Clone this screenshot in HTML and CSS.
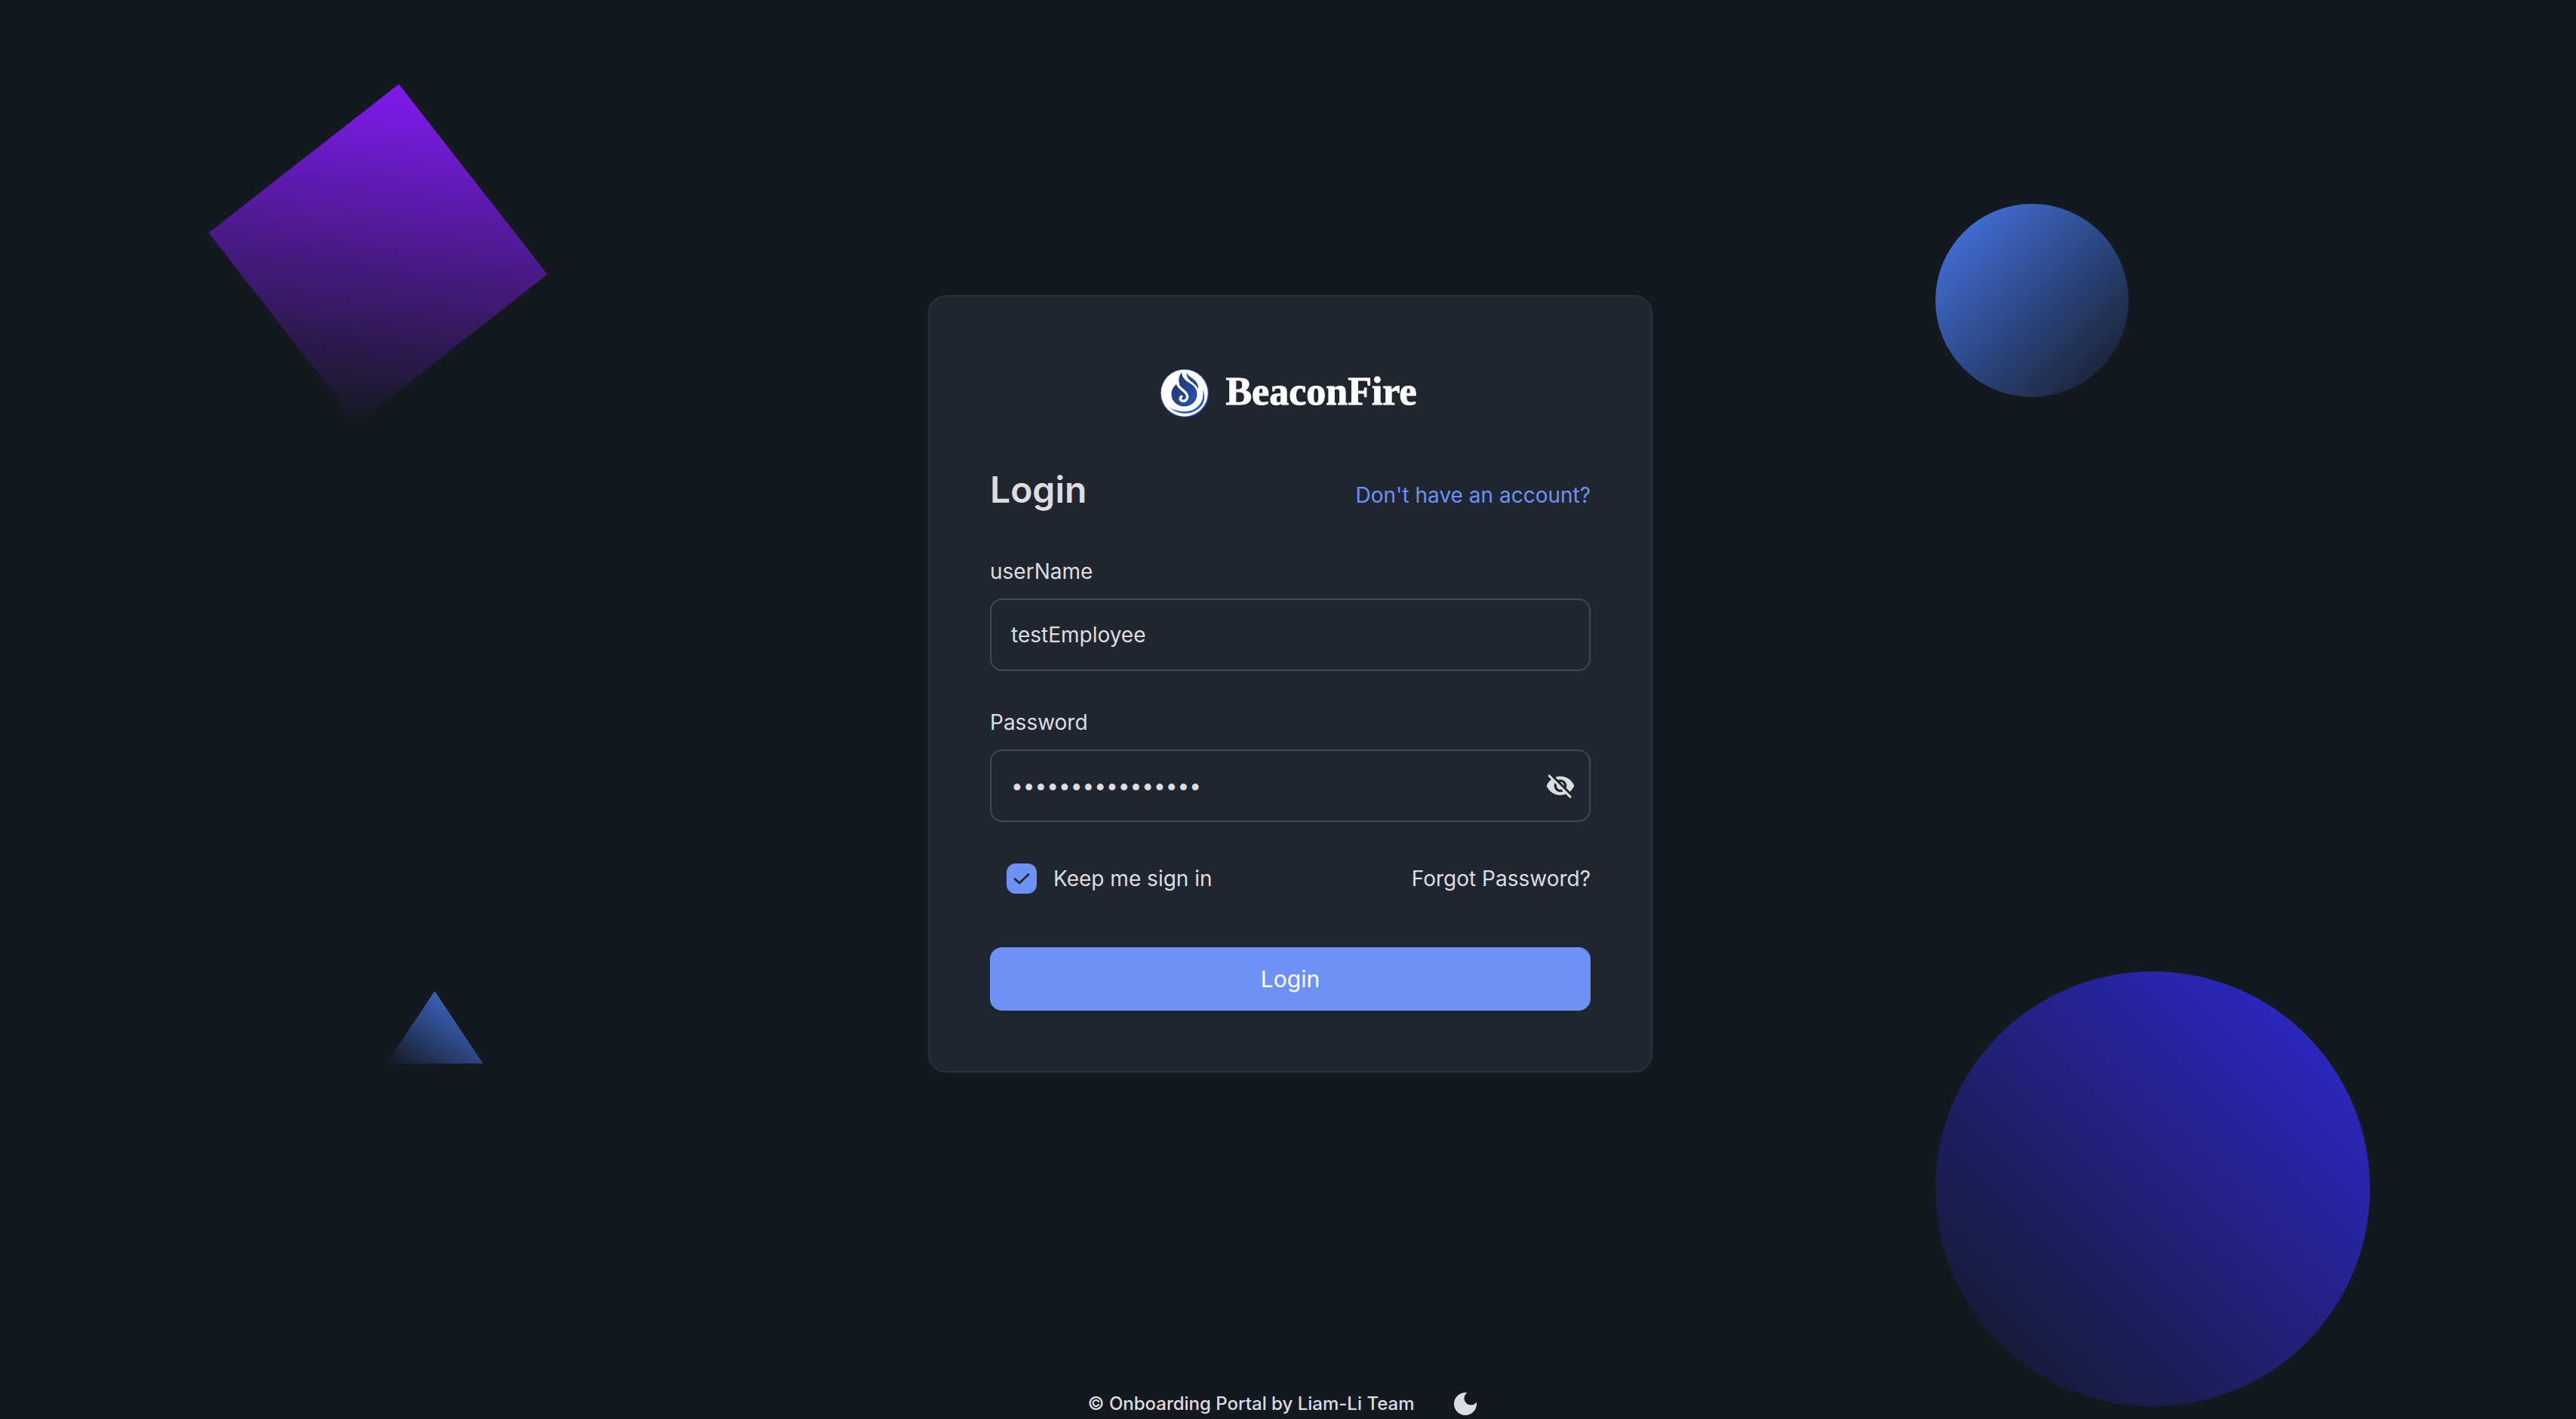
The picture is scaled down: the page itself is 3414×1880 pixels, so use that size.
FILE: index.html
```html
<!DOCTYPE html>
<html lang="en">
<head>
  <meta charset="utf-8">
  <meta name="viewport" content="width=device-width, initial-scale=1">
  <title>BeaconFire Login</title>
  <link rel="stylesheet" href="styles.css">
</head>
<body class="page">
  <div class="backdrop" aria-hidden="true">
    <div class="shape shape-square"></div>
    <div class="shape shape-triangle"></div>
    <div class="shape shape-circle-small"></div>
    <div class="shape shape-circle-large"></div>
  </div>

  <main class="main">
    <form class="card">
      <div class="brand">
        <svg class="brand-logo" viewBox="0 0 64 64" aria-hidden="true">
          <defs>
            <linearGradient id="flame" x1="0" y1="0" x2="1" y2="1">
              <stop offset="0" stop-color="#1c2f66"/>
              <stop offset="1" stop-color="#2c56b4"/>
            </linearGradient>
          </defs>
          <circle cx="32" cy="32" r="32" fill="#2a53b0"/>
          <circle cx="31.7" cy="31.7" r="31" fill="#fff"/>
          <path d="M28 4.500C24.500 9 23 15 25.500 20.500L21.500 19.500C17 23 14.500 28 14.500 33C14.500 42 22 49.500 31.500 49.500C41 49.500 48.500 42.500 48.500 33.500C48.500 25 43 21 37 17.500C32 14.500 28.500 10 28 4.500Z" fill="url(#flame)"/>
          <path d="M22.500 18.500C23 26.500 34.800 28 35.600 36C36 40.500 32 43 29 42.200C25.800 41.200 25.300 37.600 28 36.400" fill="none" stroke="#fff" stroke-width="3.400" stroke-linecap="round"/>
          <path d="M34.500 4.500C36.500 9 41 11 45 14.500C49 18 50.500 22 50 26.500C47 20.500 43 18.500 39.500 15.500C36 12.500 34 9 34.500 4.500Z" fill="#2548a0"/>
          <path d="M56 27.500C58 38 54 48 44 53.500C34 58 22 56.500 12 51C24 60.500 36 60.500 46 55.500C58 49.500 61 37.500 56 27.500Z" fill="#2d5abb"/>
        </svg>
        <span class="brand-name">BeaconFire</span>
      </div>

      <div class="heading">
        <h1 class="title">Login</h1>
        <a class="link link-primary" href="#register">Don't have an account?</a>
      </div>

      <div class="field">
        <label class="label" for="username">userName</label>
        <div class="control">
          <input class="input" id="username" type="text" value="testEmployee">
        </div>
      </div>

      <div class="field">
        <label class="label" for="password">Password</label>
        <div class="control">
          <input class="input" id="password" type="password" value="passwordpassword">
          <button class="icon-button" type="button" aria-label="Toggle password visibility">
            <svg class="icon" viewBox="0 0 24 24" aria-hidden="true"><path d="M12 7c2.76 0 5 2.24 5 5 0 .65-.13 1.26-.36 1.83l2.92 2.92c1.51-1.26 2.700-2.890 3.430-4.750-1.730-4.390-6-7.500-11-7.500-1.400 0-2.740.25-3.980.7l2.160 2.160C10.740 7.130 11.350 7 12 7zM2 4.270l2.280 2.280.46.46C3.080 8.300 1.780 10.020 1 12c1.730 4.390 6 7.500 11 7.500 1.550 0 3.030-.3 4.380-.84l.42.42L19.730 22 21 20.730 3.270 3 2 4.270zM7.530 9.800l1.550 1.550c-.05.21-.08.43-.08.65 0 1.660 1.340 3 3 3 .22 0 .44-.03.65-.08l1.550 1.550c-.67.33-1.410.53-2.200.53-2.760 0-5-2.240-5-5 0-.79.2-1.530.53-2.200zm4.310-.78l3.150 3.150.02-.16c0-1.660-1.340-3-3-3l-.17.01z"/></svg>
          </button>
        </div>
      </div>

      <div class="options">
        <label class="remember">
          <input class="checkbox" type="checkbox" checked>
          Keep me sign in
        </label>
        <a class="link" href="#forgot">Forgot Password?</a>
      </div>

      <button class="submit" type="submit">Login</button>
    </form>
  </main>

  <footer class="footer">
    <span class="copyright">© Onboarding Portal by Liam-Li Team</span>
    <button class="theme-toggle" type="button" aria-label="Toggle theme">
      <svg class="icon" viewBox="0 0 24 24" aria-hidden="true"><path d="M12 3c-4.970 0-9 4.030-9 9s4.030 9 9 9 9-4.030 9-9c0-.46-.04-.92-.1-1.360-.98 1.370-2.580 2.260-4.400 2.260-2.980 0-5.400-2.420-5.400-5.400 0-1.810.89-3.420 2.260-4.400-.44-.06-.9-.1-1.360-.1z"/></svg>
    </button>
  </footer>
</body>
</html>
```

FILE: styles.css
```css
:root {
  --bg: #14191f;
  --card: #20262f;
  --card-border: #2b313b;
  --field-border: #424952;
  --text: #dcdde0;
  --primary: #6c92f7;
}

* {
  box-sizing: border-box;
}

.page {
  position: relative;
  display: flex;
  flex-direction: column;
  min-height: 100vh;
  margin: 0;
  background: var(--bg);
  color: var(--text);
  font-family: Inter, "Liberation Sans", sans-serif;
  font-size: 28px;
  line-height: 40px;
}

/* Decorative shapes behind the card */
.backdrop {
  position: absolute;
  inset: 0;
  overflow: hidden;
}

.shape {
  position: absolute;
}

.shape-square {
  top: 176px;
  left: 10%;
  width: 320px;
  height: 320px;
  background: linear-gradient(135deg, #801bf1, rgba(128, 27, 241, 0));
  transform: rotate(52deg);
}

.shape-triangle {
  top: 1313px;
  left: 15%;
  width: 128px;
  height: 96px;
  background: linear-gradient(215deg, #4778ec, rgba(71, 120, 236, 0));
  clip-path: polygon(50% 0, 100% 100%, 0 100%);
}

.shape-circle-small {
  top: 270px;
  right: calc(8% + 320px);
  width: 256px;
  height: 256px;
  border-radius: 50%;
  background: linear-gradient(135deg, #4778ec, rgba(71, 120, 236, 0));
}

.shape-circle-large {
  top: 1287px;
  right: 8%;
  width: 576px;
  height: 576px;
  border-radius: 50%;
  background: linear-gradient(225deg, #2e29d8, rgba(46, 41, 216, 0));
}

.main {
  position: relative;
  display: flex;
  flex: 1;
  align-items: center;
  justify-content: center;
  padding-left: 6px;
}

.card {
  display: flex;
  flex-direction: column;
  width: 960px;
  padding: 80px;
  border: 2px solid var(--card-border);
  border-radius: 24px;
  background: var(--card);
}

.brand {
  display: flex;
  align-items: center;
  justify-content: center;
  gap: 22px;
  height: 96px;
  margin-bottom: 48px;
  padding-right: 4px;
}

.brand-logo {
  width: 64px;
  height: 64px;
}

.brand-name {
  padding-bottom: 4px;
  color: #fff;
  font-family: "Liberation Serif", serif;
  font-size: 52px;
  font-weight: 700;
  line-height: 64px;
  -webkit-text-stroke: 1px #fff;
}

.heading {
  display: flex;
  align-items: baseline;
  justify-content: space-between;
  margin-bottom: 56px;
}

.title {
  margin: 0;
  font-size: 48px;
  font-weight: 600;
  line-height: 64px;
}

.link {
  color: var(--text);
  text-decoration: none;
}

.link-primary {
  color: var(--primary);
}

.field {
  display: flex;
  flex-direction: column;
  gap: 16px;
}

.field + .field {
  margin-top: 48px;
}

.control {
  display: flex;
  align-items: center;
  height: 96px;
  padding: 0 18px 0 26px;
  border: 2px solid var(--field-border);
  border-radius: 16px;
}

.input {
  flex: 1;
  min-width: 0;
  height: 100%;
  padding: 0;
  border: 0;
  outline: 0;
  background: none;
  color: inherit;
  font: inherit;
}

.icon-button,
.theme-toggle {
  display: flex;
  padding: 0;
  border: 0;
  background: none;
  color: inherit;
}

.icon {
  width: 40px;
  height: 40px;
  fill: currentColor;
}

.options {
  display: flex;
  align-items: center;
  justify-content: space-between;
  height: 86px;
  margin: 32px 0 48px;
}

.remember {
  display: flex;
  align-items: center;
  gap: 22px;
  padding-left: 22px;
}

.checkbox {
  width: 40px;
  height: 40px;
  margin: 0;
  border-radius: 12px;
  appearance: none;
  background: var(--card);
  border: 2px solid var(--field-border);
}

.checkbox:checked {
  border: 0;
  background: var(--primary) url("data:image/svg+xml,%3Csvg xmlns='http://www.w3.org/2000/svg' viewBox='0 0 40 40'%3E%3Cpath d='M11 20.500l6 5.500L29 14.500' fill='none' stroke='%2320262f' stroke-width='2.800' stroke-linecap='round' stroke-linejoin='round'/%3E%3C/svg%3E") center / 40px 40px no-repeat;
}

.submit {
  height: 84px;
  padding: 0;
  border: 0;
  border-radius: 16px;
  background: var(--primary);
  color: #fff;
  font: inherit;
  font-size: 30px;
}

.footer {
  position: relative;
  display: flex;
  align-items: center;
  justify-content: center;
  gap: 38px;
  padding-top: 29px;
}

.copyright {
  font-size: 24px;
  font-weight: 500;
}

.theme-toggle {
  padding: 0 10px;
}
```
